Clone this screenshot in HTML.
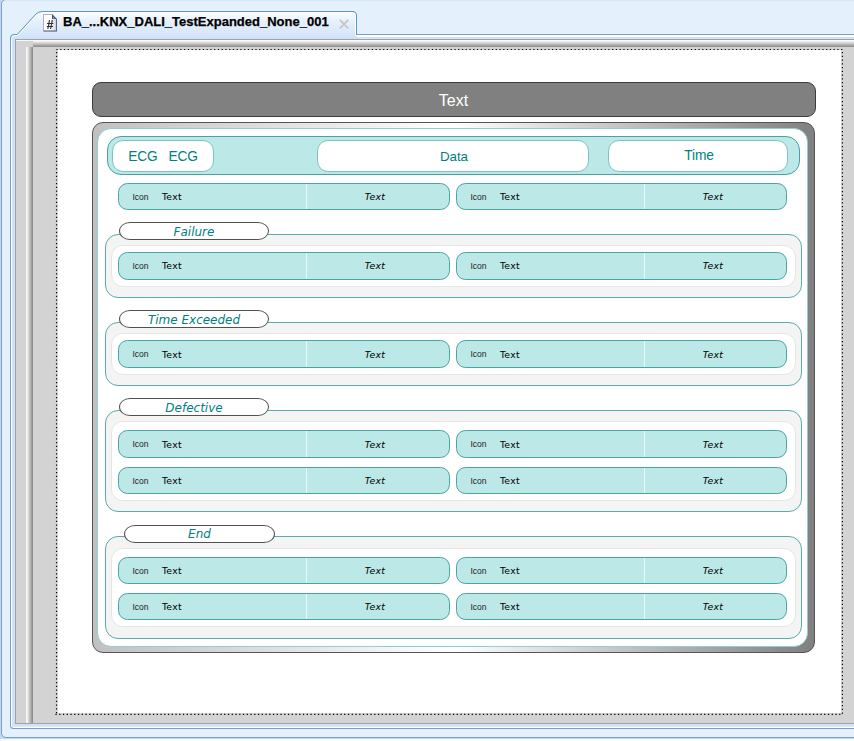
<!DOCTYPE html>
<html lang="en">
<head>
<meta charset="utf-8">
<title>BA_...KNX_DALI_TestExpanded_None_001</title>
<style>
*{box-sizing:border-box;margin:0;padding:0}
html,body{width:854px;height:741px;overflow:hidden}
body{position:relative;background:#bfd8f6;font-family:"Liberation Sans",sans-serif;}
div,span,i,svg{position:absolute}
#win{left:1px;top:-1px;width:900px;height:739px;border:1px solid #7f9ec2;border-radius:5px;background:linear-gradient(#d6e5f8 0,#e4f0fc 2px,#e4f0fc 100%)}
#below{left:0;top:739px;width:854px;height:2px;background:#f6f9fe}
#tabsvg{left:0;top:0;width:854px;height:741px}
#tabtxt{left:63px;top:14px;font-weight:bold;font-size:13px;-webkit-text-stroke:0.25px #000;line-height:16px;color:#000;white-space:nowrap}
#hash{left:46.4px;top:18.4px;font-size:12px;line-height:14px;font-weight:bold;font-style:italic;color:#2a2e2e;filter:grayscale(1);-webkit-text-stroke:0.2px #2a2e2e}
#gray{left:15px;top:39px;width:900px;height:685px;background:#d3d3d3;border:1px solid #a2a2a2}
#hr{left:33px;top:40px;width:900px;height:7px;background:linear-gradient(#ffffff,#f2f2f2 18%,#8a8a8a)}
#hl{left:16px;top:40px;width:17px;height:1px;background:#f6f6f6}
#vr{left:26px;top:47px;width:7px;height:676px;background:linear-gradient(to right,#ffffff,#f0f0f0 18%,#858585)}
#title{left:92px;top:82px;width:724px;height:35px;background:#808080;border:1px solid #3c3c3c;border-radius:9px;color:#fff;font-size:16px;line-height:35px;text-align:center;text-indent:-1px}
#frame{left:92px;top:122px;width:723px;height:531px;border:1px solid #555;border-radius:11px;background:linear-gradient(to right,#c0c0c0 0%,#ffffff 50%,#808080 100%)}
#inner{left:97px;top:128px;width:711px;height:519px;border:1px solid #93cdcd;border-radius:14px;background:#fff}
#ecg{left:107px;top:136px;width:693px;height:39px;background:#bce8e7;border:1px solid #48a2a2;border-radius:14px}
.wp{background:#fff;border:1px solid #7cc4c4;border-radius:11px;top:140px;height:32px;color:#008080;font-size:13.75px;line-height:31px;letter-spacing:-0.15px;text-align:center;white-space:pre}
.row{width:332px;height:27px;background:#bce8e7;border:1px solid #4aa4a4;border-radius:9.5px}
.row span{top:0;line-height:25px;white-space:nowrap}
.tall{height:28px}
.sh span{top:1px}
.sh .ic{top:0}
.r{width:331px}
.ic{left:13.5px;font-size:8.5px;color:#222;line-height:26px !important}
.tx{left:43px;font-size:9.3px;letter-spacing:0.25px;color:#000;font-family:"DejaVu Sans","Liberation Sans",sans-serif}
.ti{left:187.5px;width:137px;text-align:center;font-size:9.3px;letter-spacing:0.25px;font-style:italic;color:#000;font-family:"DejaVu Sans","Liberation Sans",sans-serif}
.dv{left:187px;top:0;bottom:0;width:1px;background:rgba(255,255,255,.7)}
.go{left:105px;width:697px;background:#f4f4f4;border:1px solid #5aabab;border-radius:13px}
.gi{left:111px;width:685px;background:#fff;border:1px solid #e6e6e6;border-radius:12px}
.lb{height:18px;background:#fff;border:1px solid #505050;border-radius:11px/9px;color:#008080;font-family:"DejaVu Sans","Liberation Sans",sans-serif;font-style:italic;font-size:12px;line-height:18px;text-align:center}
</style>
</head>
<body>
<div id="win"></div>
<div id="below"></div>
<svg id="tabsvg" viewBox="0 0 854 741">
<defs>
<linearGradient id="tg" x1="0" y1="0" x2="0" y2="1"><stop offset="0" stop-color="#fbfdff"/><stop offset="0.3" stop-color="#e9f2fd"/><stop offset="1" stop-color="#cfe2f8"/></linearGradient>
<linearGradient id="pg" x1="0" y1="0" x2="1" y2="0"><stop offset="0" stop-color="#ffffff"/><stop offset="0.55" stop-color="#ffffff"/><stop offset="1" stop-color="#c3cbe6"/></linearGradient>
</defs>
<path d="M10.5 729 L10.5 38 Q10.5 34.5 14 34.5 L17.2 34.5 L35.8 14.2 Q38.3 11.5 42.8 11.5 L353 11.5 Q356.5 11.5 356.5 15 L356.5 34.5 L860 34.5 L860 729 Z" fill="#cfe3f8" stroke="none"/>
<path d="M11 39 L11 38 Q11 35 14 35 L17.2 35 L35.8 14.7 Q38.3 12 42.8 12 L353 12 Q356 12 356 15 L356 39 Z" fill="url(#tg)"/>
<path d="M11.5 727 L11.5 38.5 Q11.5 35.5 14 35.5 L17.8 35.5 L36.6 15.1 Q38.8 12.5 42.8 12.5 L353 12.5 Q355.5 12.5 355.5 15 L355.5 35.5 L860 35.5" fill="none" stroke="#ffffff" stroke-width="1"/>
<path d="M13 727.5 L860 727.5" fill="none" stroke="#ffffff" stroke-width="1.4"/>
<path d="M357 36 L860 36" fill="none" stroke="#ffffff" stroke-width="2"/>
<path d="M860 728.5 L13 728.5 Q10.5 728.5 10.5 726 L10.5 38 M356.5 34.5 L860 34.5" fill="none" stroke="#7d9cbf" stroke-width="1"/>
<path d="M10.5 40 L10.5 38 Q10.5 34.5 14 34.5 L17.2 34.5 L35.8 14.2 Q38.3 11.5 42.8 11.5 L353 11.5 Q356.5 11.5 356.5 15 L356.5 35" fill="none" stroke="#5b98bd" stroke-width="1"/>
<path d="M10 8.5 L860 8.5" stroke="#e8f2fc" stroke-width="1" fill="none"/>
<!-- document icon -->
<g>
<path d="M43.5 14.5 L52 14.5 L56.5 19 L56.5 31 L43.5 31 Z" fill="url(#pg)"/>
<path d="M43.5 31 L43.5 14.5 L52 14.5" fill="none" stroke="#b3adcb" stroke-width="1"/>
<path d="M52 14 L57 19 L52 19 Z" fill="#474c70"/>
<path d="M53 16.5 L55.2 18.6 L53 18.6 Z" fill="#9aa0c0"/>
<path d="M56.5 19 L56.5 31" fill="none" stroke="#5c6090" stroke-width="1"/>
<path d="M43.5 31 L57 31" fill="none" stroke="#5a6680" stroke-width="1.2"/>
</g>
<!-- close x -->
<path d="M339.8 19.9 L348.3 28.4 M348.3 19.9 L339.8 28.4" stroke="#c6c6c6" stroke-width="1.8" fill="none"/>
</svg>
<div id="hash">#</div>
<div id="tabtxt">BA_...KNX_DALI_TestExpanded_None_001</div>
<div id="gray"></div>
<div id="hr"></div>
<div id="hl"></div>
<div id="vr"></div>
<svg style="left:0;top:0;width:854px;height:741px" viewBox="0 0 854 741">
<rect x="57.8" y="50" width="783.4" height="662.9" fill="#fff"/>
<g fill="none" stroke="#000" stroke-width="1.2" stroke-dasharray="1.25 2.5">
<path d="M56.4 49.5 L843 49.5" stroke-dasharray="1.25 2.5045"/>
<path d="M56.55 51.875 L56.55 715"/>
<path d="M842.4 52.1 L842.4 715" stroke-dasharray="1.25 2.502"/>
<path d="M55.425 714.35 L843 714.35" stroke-dasharray="1.25 2.5"/>
</g>
</svg>
<div id="title">Text</div>
<div id="frame"></div>
<div id="inner"></div>
<div id="ecg"></div>
<div class="wp" style="left:112px;width:102px">ECG   ECG</div>
<div class="wp" style="left:317px;width:272px;text-indent:2px;font-size:13.4px;letter-spacing:-0.1px">Data</div>
<div class="wp" style="left:608px;width:180px;line-height:29.4px;text-indent:2px">Time</div>
<div class="row" style="left:118px;top:183px"><span class="ic">Icon</span><span class="tx">Text</span><i class="dv"></i><span class="ti">Text</span></div>
<div class="row r" style="left:456px;top:183px"><span class="ic">Icon</span><span class="tx">Text</span><i class="dv"></i><span class="ti">Text</span></div>
<div class="go" style="top:234px;height:64px"></div>
<div class="gi" style="top:245px;height:42px"></div>
<div class="lb" style="left:119px;top:222px;width:150px">Failure</div>
<div class="row tall" style="left:118px;top:252px"><span class="ic">Icon</span><span class="tx">Text</span><i class="dv"></i><span class="ti">Text</span></div>
<div class="row tall r" style="left:456px;top:252px"><span class="ic">Icon</span><span class="tx">Text</span><i class="dv"></i><span class="ti">Text</span></div>
<div class="go" style="top:322px;height:64px"></div>
<div class="gi" style="top:333px;height:42px"></div>
<div class="lb" style="left:119px;top:310px;width:150px">Time Exceeded</div>
<div class="row tall sh" style="left:118px;top:340px"><span class="ic">Icon</span><span class="tx">Text</span><i class="dv"></i><span class="ti">Text</span></div>
<div class="row tall sh r" style="left:456px;top:340px"><span class="ic">Icon</span><span class="tx">Text</span><i class="dv"></i><span class="ti">Text</span></div>
<div class="go" style="top:410px;height:102px"></div>
<div class="gi" style="top:421px;height:80px"></div>
<div class="lb" style="left:119px;top:398px;width:150px">Defective</div>
<div class="row tall sh" style="left:118px;top:430px"><span class="ic">Icon</span><span class="tx">Text</span><i class="dv"></i><span class="ti">Text</span></div>
<div class="row tall sh r" style="left:456px;top:430px"><span class="ic">Icon</span><span class="tx">Text</span><i class="dv"></i><span class="ti">Text</span></div>
<div class="row" style="left:118px;top:467px"><span class="ic">Icon</span><span class="tx">Text</span><i class="dv"></i><span class="ti">Text</span></div>
<div class="row r" style="left:456px;top:467px"><span class="ic">Icon</span><span class="tx">Text</span><i class="dv"></i><span class="ti">Text</span></div>
<div class="go" style="top:536px;height:103px"></div>
<div class="gi" style="top:548px;height:79px"></div>
<div class="lb" style="left:124px;top:525px;width:151px;line-height:16px">End</div>
<div class="row" style="left:118px;top:557px"><span class="ic">Icon</span><span class="tx">Text</span><i class="dv"></i><span class="ti">Text</span></div>
<div class="row r" style="left:456px;top:557px"><span class="ic">Icon</span><span class="tx">Text</span><i class="dv"></i><span class="ti">Text</span></div>
<div class="row" style="left:118px;top:593px"><span class="ic">Icon</span><span class="tx">Text</span><i class="dv"></i><span class="ti">Text</span></div>
<div class="row r" style="left:456px;top:593px"><span class="ic">Icon</span><span class="tx">Text</span><i class="dv"></i><span class="ti">Text</span></div>
</body>
</html>
